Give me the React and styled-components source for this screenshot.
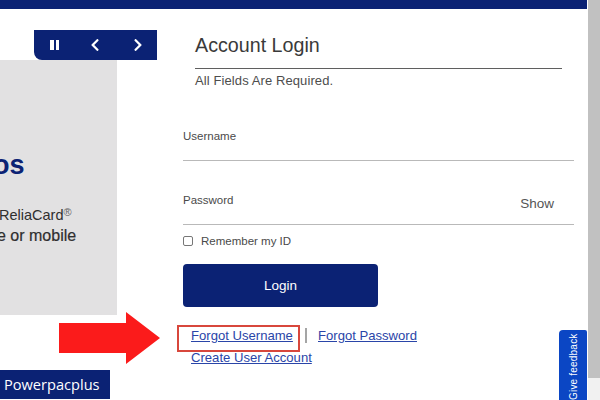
import React from 'react';
import styled, { createGlobalStyle } from 'styled-components';
import { FaChevronLeft, FaChevronRight } from 'react-icons/fa';

const navy = '#0b2274';

const GlobalStyle = createGlobalStyle`
  html, body {
    margin: 0;
    padding: 0;
    background: #fff;
    overflow: hidden;
  }
  body {
    font-family: "Liberation Sans", Arial, sans-serif;
  }
`;

const Frame = styled.div`
  position: relative;
  display: flex;
  width: 600px;
  height: 400px;
  overflow: hidden;
`;

const Page = styled.div`
  width: 587px;
  display: flex;
  flex-direction: column;
`;

const TopBar = styled.div`
  height: 9px;
  flex: none;
  background: ${navy};
`;

const Content = styled.div`
  flex: 1;
  display: flex;
  min-height: 0;
`;

const Aside = styled.div`
  width: 157px;
  flex: none;
  padding-top: 21px;
  display: flex;
  flex-direction: column;
  align-items: flex-end;
`;

const Controls = styled.div`
  width: 123px;
  height: 30px;
  box-sizing: border-box;
  padding: 0 12px 0 16px;
  display: flex;
  align-items: center;
  justify-content: space-between;
  background: ${navy};
  border-bottom-left-radius: 8px;
  color: #fff;
  font-size: 14px;
`;

const PauseIcon = styled.span`
  width: 9px;
  height: 10px;
  display: flex;
  justify-content: space-between;
  &::before,
  &::after {
    content: '';
    width: 3.5px;
    background: #fff;
  }
`;

const Slide = styled.div`
  align-self: flex-start;
  width: 117px;
  height: 255px;
  box-sizing: border-box;
  padding-top: 90px;
  background: #e2e1e2;
  overflow: hidden;
`;

const SlideTitle = styled.div`
  margin-left: -7px;
  font-size: 27px;
  line-height: 30px;
  font-weight: 700;
  color: ${navy};
`;

const SlideLine = styled.div`
  margin-top: ${(p) => p.$top || 0}px;
  margin-left: ${(p) => p.$shift}px;
  font-size: ${(p) => p.$size}px;
  line-height: 21px;
  white-space: nowrap;
  color: #2f2f2f;
  -webkit-text-stroke: ${(p) => (p.$strong ? '0.2px #2f2f2f' : '0')};
  sup {
    font-size: 11px;
    line-height: 0;
    color: #666;
    vertical-align: 4px;
  }
`;

const Main = styled.div`
  flex: 1;
  padding-left: 26px;
  display: flex;
  flex-direction: column;
`;

const Heading = styled.div`
  margin-left: 12px;
  width: 367px;
  height: 60px;
  box-sizing: border-box;
  padding-top: 23px;
  font-size: 19.7px;
  line-height: 26px;
  color: #3a3a3a;
  border-bottom: 1px solid #5f5f5f;
`;

const Required = styled.div`
  margin-left: 12px;
  padding-top: 4px;
  font-size: 13px;
  line-height: 16px;
  letter-spacing: 0.1px;
  color: #4d4d4d;
`;

const Field = styled.div`
  width: 391px;
  height: ${(p) => p.$height}px;
  padding-top: ${(p) => p.$pad}px;
  box-sizing: border-box;
  display: flex;
  align-items: flex-start;
  justify-content: space-between;
  border-bottom: 1px solid #b9b9b9;
`;

const FieldLabel = styled.label`
  font-size: 11.5px;
  line-height: 14px;
  color: #4a4a4a;
`;

const ShowToggle = styled.span`
  margin: 3px 20px 0 0;
  font-size: 13.5px;
  line-height: 16px;
  color: #555;
`;

const Remember = styled.label`
  margin-top: 9px;
  height: 13px;
  display: flex;
  align-items: center;
  font-size: 11.5px;
  color: #4a4a4a;
`;

const CheckBox = styled.span`
  width: 8px;
  height: 8px;
  margin-right: 8px;
  border: 1px solid #777;
  border-radius: 2px;
  box-sizing: content-box;
`;

const LoginButton = styled.button`
  margin-top: 17px;
  width: 195px;
  height: 43px;
  border: 0;
  border-radius: 4px;
  background: ${navy};
  color: #fff;
  font-family: inherit;
  font-size: 13.5px;
`;

const LinkRow = styled.div`
  margin: 18px 0 0 -6px;
  display: flex;
  align-items: flex-start;
`;

const Highlight = styled.div`
  width: 123px;
  height: 27px;
  box-sizing: border-box;
  padding: 1px 0 0 12px;
  border: 2px solid #d8473c;
`;

const Separator = styled.span`
  width: 2px;
  height: 15px;
  margin: 3px 11px 0 5px;
  background: #a5a5a5;
`;

const TextLink = styled.a`
  display: block;
  font-size: 13.1px;
  line-height: 16px;
  white-space: nowrap;
  color: #2a45a8;
  text-decoration: underline;
`;

const PasswordLink = styled(TextLink)`
  margin-top: 3px;
`;

const AccountLink = styled(TextLink)`
  margin: -2px 0 0 8px;
`;

const Track = styled.div`
  flex: 1;
  margin-left: 1px;
  display: flex;
  flex-direction: column;
  background: #f1f1f1;
`;

const Thumb = styled.div`
  height: 378px;
  background: #c1c1c1;
`;

const Brand = styled.div`
  position: absolute;
  left: 0;
  top: 370px;
  width: 110px;
  height: 29px;
  box-sizing: border-box;
  padding-left: 4px;
  background: ${navy};
  color: #fff;
  font-family: "Open Sans", sans-serif;
  font-size: 14.6px;
  line-height: 29px;
`;

const Arrow = styled.svg`
  position: absolute;
  left: 59px;
  top: 311px;
`;

const Feedback = styled.div`
  position: absolute;
  left: 559px;
  top: 330px;
  width: 28px;
  height: 70px;
  box-sizing: border-box;
  padding: 12px 5px 0 0;
  background: #0b46c4;
  border-top-left-radius: 4px;
  border-top-right-radius: 2px;
  color: #fff;
  font-size: 10px;
  line-height: 16px;
  letter-spacing: 0.2px;
  white-space: nowrap;
  writing-mode: vertical-rl;
  span {
    display: block;
    transform: rotate(180deg);
  }
`;

const App = () => (
  <Frame>
    <GlobalStyle />
    <Page>
      <TopBar />
      <Content>
        <Aside>
          <Controls>
            <PauseIcon />
            <FaChevronLeft />
            <FaChevronRight />
          </Controls>
          <Slide>
            <SlideTitle>os</SlideTitle>
            <SlideLine $top={25} $shift={-1} $size={14.5}>
              ReliaCard<sup>®</sup>
            </SlideLine>
            <SlideLine $top={-1} $shift={-3} $size={16} $strong>
              e or mobile
            </SlideLine>
          </Slide>
        </Aside>
        <Main>
          <Heading>Account Login</Heading>
          <Required>All Fields Are Required.</Required>
          <Field $height={72} $pad={40}>
            <FieldLabel>Username</FieldLabel>
          </Field>
          <Field $height={64} $pad={32}>
            <FieldLabel>Password</FieldLabel>
            <ShowToggle>Show</ShowToggle>
          </Field>
          <Remember>
            <CheckBox />
            Remember my ID
          </Remember>
          <LoginButton>Login</LoginButton>
          <LinkRow>
            <Highlight>
              <TextLink>Forgot Username</TextLink>
            </Highlight>
            <Separator />
            <PasswordLink>Forgot Password</PasswordLink>
          </LinkRow>
          <AccountLink>Create User Account</AccountLink>
        </Main>
      </Content>
    </Page>
    <Track>
      <Thumb />
    </Track>
    <Brand>Powerpacplus</Brand>
    <Arrow width="102" height="54" viewBox="0 0 102 54">
      <path d="M0 12H67V1L101 27 67 53V42H0Z" fill="#fb1b1b" />
    </Arrow>
    <Feedback>
      <span>Give feedback</span>
    </Feedback>
  </Frame>
);

export default App;
